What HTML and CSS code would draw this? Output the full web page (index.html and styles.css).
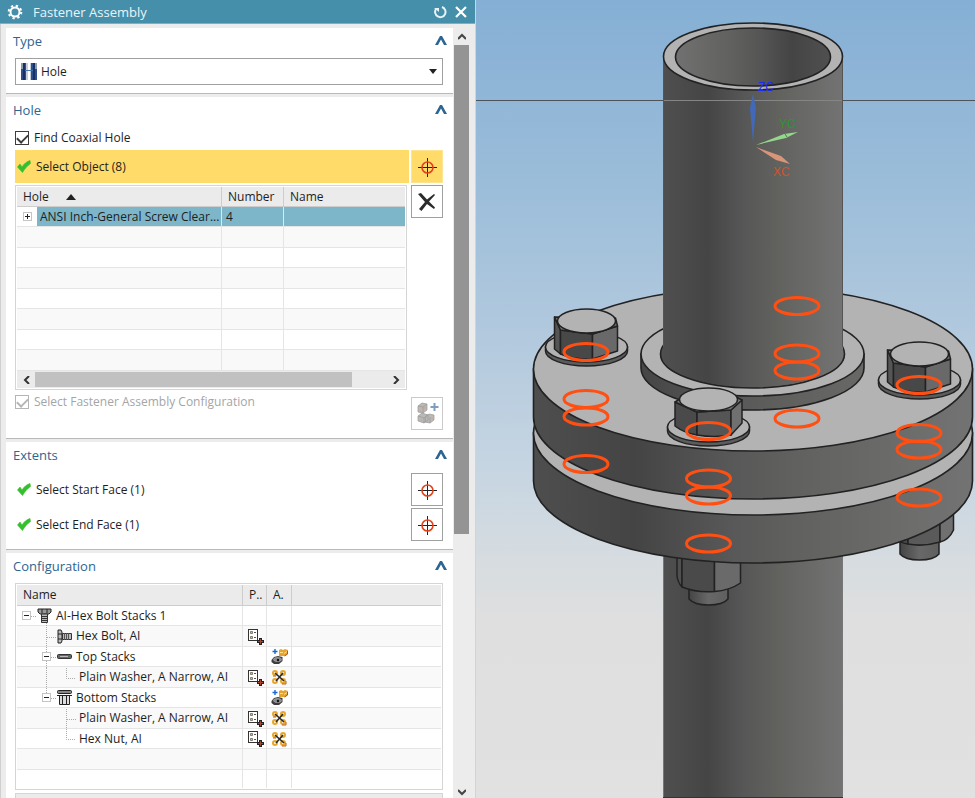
FILE: index.html
```html
<!DOCTYPE html>
<html lang="en">
<head>
    <meta charset="UTF-8">
    <meta name="viewport" content="width=device-width, initial-scale=1.0">
    <title>Fastener Assembly</title>
    <link rel="stylesheet" href="styles.css">
</head>
<body>
    <!-- Shared icons -->
    <svg class="defs" width="0" height="0" aria-hidden="true">
        <symbol id="i-chevron" viewBox="0 0 12 10"><path d="M0 9 5 0h2l5 9H9L6 3.5 3 9z" fill="#2c6592"/></symbol>
        <symbol id="i-check" viewBox="0 0 14 13"><path d="M.5 7 3 4l2 3C7 4 9.5 1.500 13 .5L13.500 3.500C10 6 8 8.500 5.500 12.500z" fill="#35bf2e" stroke="#35bf2e" stroke-width=".6"/></symbol>
        <symbol id="i-target" viewBox="0 0 20 20">
            <path d="M10.500 1v19M1 10.500h19" stroke="#222"/>
            <circle cx="10.500" cy="10.500" r="5.500" fill="none" stroke="#e0451d" stroke-width="1.600"/>
        </symbol>
        <symbol id="i-props" viewBox="0 0 17 17">
            <rect x="1.500" y="1.500" width="9" height="11" fill="#fff" stroke="#333"/>
            <path d="M3.500 3.500h2v2h-2zM3.500 8.500h2v2h-2z" fill="#e8c22b" stroke="#666" stroke-width=".8"/>
            <path d="M7 4.500h2M7 9.500h2" stroke="#555"/>
            <path d="M12 10h3v2h2v3h-2v2h-3v-2h-2v-3h2z" fill="#222"/>
            <path d="M13.500 11v5M11 13.500h5" stroke="#a8452c"/>
        </symbol>
        <symbol id="i-add" viewBox="0 0 17 17">
            <path d="M4 1v5M1.500 3.500h5" stroke="#1668d8" stroke-width="1.400"/>
            <path d="M8 2 10 1l2 1 2-1 3 1v4l-3 2H8z" fill="#e7a32f"/>
            <path d="M9 4.500h3M13 5.500l3-2" stroke="#ffe08a"/>
            <path d="M16.500 3v3l-3 2" fill="none" stroke="#b4501c"/>
            <path d="M.5 12 3 9l4-1 4.500 1v4L8 16H3L.5 14z" fill="#3d3d3d"/>
            <ellipse cx="6.500" cy="11.500" rx="4" ry="2" fill="#888" stroke="#bbb" stroke-width=".6"/>
            <circle cx="7" cy="12" r="1.200" fill="#111"/>
        </symbol>
        <symbol id="i-remove" viewBox="0 0 16 16">
            <g fill="none" stroke="#e9a626" stroke-width="2">
                <circle cx="4" cy="4" r="2"/><circle cx="12" cy="4" r="2"/>
                <circle cx="4" cy="12" r="2"/><circle cx="12" cy="12" r="2"/>
            </g>
            <path d="M2 7h3M15 12v3h-4" fill="none" stroke="#c45a18"/>
            <path d="m4 4 9 8M12 4l-7 8" stroke="#2b2b2b" stroke-width="1.600"/>
        </symbol>
    </svg>

    <main class="workspace">
        <section class="dialog" aria-label="Fastener Assembly">
            <header class="titlebar">
                <button class="title-btn" aria-label="Dialog options">
                    <svg width="16" height="16" viewBox="0 0 16 16">
                        <circle cx="8" cy="8" r="4.500" fill="none" stroke="#fff" stroke-width="2"/>
                        <circle cx="8" cy="8" r="6.300" fill="none" stroke="#fff" stroke-width="2" stroke-dasharray="2.300 2.650"/>
                    </svg>
                </button>
                <h1>Fastener Assembly</h1>
                <button class="title-btn" aria-label="Reset">
                    <svg width="14" height="14" viewBox="0 0 14 14"><path d="M3 4a5.200 5.200 0 1 0 6-2" fill="none" stroke="#e8f3f7" stroke-width="2"/><path d="M1 3h5v4z" fill="#e8f3f7"/></svg>
                </button>
                <button class="title-btn" aria-label="Close">
                    <svg width="12" height="12" viewBox="0 0 12 12"><path d="m1 1 10 10M11 1 1 11" stroke="#fff" stroke-width="2.200"/></svg>
                </button>
            </header>

            <div class="dialog-body">
                <div class="groups">
                    <section class="group">
                        <div class="group-head">
                            <h2>Type</h2>
                            <button class="collapse" aria-label="Collapse Type"><svg width="12" height="10"><use href="#i-chevron"/></svg></button>
                        </div>
                        <div class="type-box">
                            <svg width="16" height="17" viewBox="0 0 16 17" aria-hidden="true">
                                <path d="M0 0h5v17H0zM10 0h6v17h-6z" fill="#2d4f8c"/>
                                <path d="M0 0h2v6H0zM14 0h2v6h-2z" fill="#8b9aa8"/>
                                <path d="M3 0v17M13 0v17" stroke="#1a2f66" stroke-width="2"/>
                                <path d="M5 0h2v17H5zM9 0h1v17H9z" fill="#c3cedb"/>
                                <path d="M4 7.500h8" stroke="#4a72ad"/>
                            </svg>
                            <select aria-label="Type"><option>Hole</option></select>
                            <svg width="8" height="5" viewBox="0 0 8 5" aria-hidden="true"><path d="M0 0h8L4 5z" fill="#222"/></svg>
                        </div>
                    </section>

                    <section class="group group-hole">
                        <div class="group-head">
                            <h2>Hole</h2>
                            <button class="collapse" aria-label="Collapse Hole"><svg width="12" height="10"><use href="#i-chevron"/></svg></button>
                        </div>
                        <label class="check-row"><input type="checkbox" checked> Find Coaxial Hole</label>
                        <div class="pick-row active">
                            <div class="pick-label"><svg width="14" height="13"><use href="#i-check"/></svg>Select Object (8)</div>
                            <button class="tool" aria-label="Select Object"><svg width="20" height="20"><use href="#i-target"/></svg></button>
                        </div>
                        <div class="list-row">
                            <div class="list">
                                <table class="grid hole-grid">
                                    <colgroup><col class="c-hole"><col class="c-number"><col></colgroup>
                                    <thead>
                                        <tr>
                                            <th>Hole <svg class="sort" width="10" height="6" viewBox="0 0 10 6"><path d="M5 0 10 6H0z" fill="#222"/></svg></th>
                                            <th>Number</th>
                                            <th>Name</th>
                                        </tr>
                                    </thead>
                                    <tbody>
                                        <tr class="selected">
                                            <td><div class="hole-cell"><button class="expander plus" aria-label="Expand"></button><span>ANSI Inch-General Screw Clear...</span></div></td>
                                            <td>4</td>
                                            <td></td>
                                        </tr>
                                        <tr><td></td><td></td><td></td></tr>
                                        <tr><td></td><td></td><td></td></tr>
                                        <tr><td></td><td></td><td></td></tr>
                                        <tr><td></td><td></td><td></td></tr>
                                        <tr><td></td><td></td><td></td></tr>
                                        <tr><td></td><td></td><td></td></tr>
                                        <tr><td></td><td></td><td></td></tr>
                                    </tbody>
                                </table>
                                <div class="hscroll">
                                    <button aria-label="Scroll left"><svg width="7" height="8" viewBox="0 0 7 8"><path d="M6 0 2 4l4 4" fill="none" stroke="#333" stroke-width="2"/></svg></button>
                                    <div class="htrack"><div class="hthumb"></div></div>
                                    <button aria-label="Scroll right"><svg width="7" height="8" viewBox="0 0 7 8"><path d="m1 0 4 4-4 4" fill="none" stroke="#333" stroke-width="2"/></svg></button>
                                </div>
                            </div>
                            <button class="tool" aria-label="Remove">
                                <svg width="18" height="18" viewBox="0 0 18 18"><path d="M0 1 3 0l6 6.500L16 1l1 1-6 6.500 6 6-1 1.500-7-5L3.500 18 1 16l6-7z" fill="#2b2b2b"/></svg>
                            </button>
                        </div>
                        <div class="config-row">
                            <label class="check-row disabled"><input type="checkbox" checked disabled> Select Fastener Assembly Configuration</label>
                            <button class="tool" aria-label="Select Fastener Assembly Configuration" disabled>
                                <svg width="23" height="23" viewBox="0 0 23 23">
                                    <g fill="#bcb8b5" stroke="#999" stroke-width=".7">
                                        <path d="m2 4 4-3 5 1v6l-4 3-5-1zM2 14l4-3 6 2v5l-4 3-6-2zM10 14l3-2 5 1v5l-4 3-5-1z"/>
                                        <path d="m2 4 5 1 4-3M7 5v6M2 14l6 2 4-3M8 16v5M14 15v6" fill="none"/>
                                    </g>
                                    <path d="M4 9h1M9 5v2M5 18h1M16 16v1M11 19h1" stroke="#d99a7c"/>
                                    <path d="M18.500 1v8M14.500 5h8" stroke="#7f9dbd" stroke-width="2"/>
                                </svg>
                            </button>
                        </div>
                    </section>

                    <section class="group">
                        <div class="group-head">
                            <h2>Extents</h2>
                            <button class="collapse" aria-label="Collapse Extents"><svg width="12" height="10"><use href="#i-chevron"/></svg></button>
                        </div>
                        <div class="pick-list">
                            <div class="pick-row">
                                <div class="pick-label"><svg width="14" height="13"><use href="#i-check"/></svg>Select Start Face (1)</div>
                                <button class="tool" aria-label="Select Start Face"><svg width="20" height="20"><use href="#i-target"/></svg></button>
                            </div>
                            <div class="pick-row">
                                <div class="pick-label"><svg width="14" height="13"><use href="#i-check"/></svg>Select End Face (1)</div>
                                <button class="tool" aria-label="Select End Face"><svg width="20" height="20"><use href="#i-target"/></svg></button>
                            </div>
                        </div>
                    </section>

                    <section class="group group-config">
                        <div class="group-head">
                            <h2>Configuration</h2>
                            <button class="collapse" aria-label="Collapse Configuration"><svg width="12" height="10"><use href="#i-chevron"/></svg></button>
                        </div>
                        <div class="list">
                            <table class="grid config-grid">
                                <colgroup><col class="c-name"><col class="c-prop"><col class="c-act"><col></colgroup>
                                <thead>
                                    <tr><th>Name</th><th>P..</th><th>A.</th><th></th></tr>
                                </thead>
                                <tbody>
                                    <tr>
                                        <td><div class="node level-1">
                                            <svg class="lines" width="62" height="21"><path d="M14 10.500h6M29.500 17v4"/></svg>
                                            <button class="expander" aria-label="Collapse"></button>
                                            <svg width="15" height="15" viewBox="0 0 15 15"><path d="M1 1h13v3L12 6H3L1 4z" fill="#999" stroke="#222"/><path d="M5 1v4M10 1v4" stroke="#222"/><path d="M4.500 6h6v8.500h-6z" fill="#bbb" stroke="#333"/><path d="M4 8.500h7M4 10.500h7M4 12.500h7" stroke="#333"/></svg>
                                            AI-Hex Bolt Stacks 1
                                        </div></td>
                                        <td></td><td></td><td></td>
                                    </tr>
                                    <tr>
                                        <td><div class="node level-2 leaf">
                                            <svg class="lines" width="62" height="21"><path d="M29.500 0v21M30 10.500h9"/></svg>
                                            <svg width="15" height="15" viewBox="0 0 15 15"><path d="M1 1h3l1 2v9l-1 2H1z" fill="#bbb" stroke="#222"/><path d="M1 5h4M1 10h4" stroke="#222"/><path d="M5.500 4.500h9v6h-9z" fill="#bbb" stroke="#333"/><path d="M7.500 4v7M9.500 4v7M11.500 4v7" stroke="#555"/></svg>
                                            Hex Bolt, AI
                                        </div></td>
                                        <td><svg width="17" height="17"><use href="#i-props"/></svg></td><td></td><td></td>
                                    </tr>
                                    <tr>
                                        <td><div class="node level-2">
                                            <svg class="lines" width="62" height="21"><path d="M29.500 0v21M34 10.500h6"/></svg>
                                            <button class="expander" aria-label="Collapse"></button>
                                            <svg width="15" height="15" viewBox="0 0 15 15"><rect x=".5" y="5.500" width="14" height="4" rx="1" fill="#666" stroke="#333"/><path d="M3 7.500h8" stroke="#bbb"/></svg>
                                            Top Stacks
                                        </div></td>
                                        <td></td><td><svg width="17" height="17"><use href="#i-add"/></svg></td><td></td>
                                    </tr>
                                    <tr>
                                        <td><div class="node level-3">
                                            <svg class="lines" width="62" height="21"><path d="M29.500 0v21M49.500 0v10.500h9"/></svg>
                                            Plain Washer, A Narrow, AI
                                        </div></td>
                                        <td><svg width="17" height="17"><use href="#i-props"/></svg></td>
                                        <td><svg width="16" height="16"><use href="#i-remove"/></svg></td><td></td>
                                    </tr>
                                    <tr>
                                        <td><div class="node level-2">
                                            <svg class="lines" width="62" height="21"><path d="M29.500 0v10M34 10.500h6"/></svg>
                                            <button class="expander" aria-label="Collapse"></button>
                                            <svg width="15" height="15" viewBox="0 0 15 15"><rect x=".5" y=".5" width="14" height="3" rx="1" fill="#888" stroke="#222"/><path d="M2.500 5.500h10v9h-10z" fill="#ddd" stroke="#222"/><path d="M0 5.500h15M5.500 6v8M9.500 6v8" stroke="#222"/></svg>
                                            Bottom Stacks
                                        </div></td>
                                        <td></td><td><svg width="17" height="17"><use href="#i-add"/></svg></td><td></td>
                                    </tr>
                                    <tr>
                                        <td><div class="node level-3">
                                            <svg class="lines" width="62" height="21"><path d="M49.500 0v21M50 10.500h9"/></svg>
                                            Plain Washer, A Narrow, AI
                                        </div></td>
                                        <td><svg width="17" height="17"><use href="#i-props"/></svg></td>
                                        <td><svg width="16" height="16"><use href="#i-remove"/></svg></td><td></td>
                                    </tr>
                                    <tr>
                                        <td><div class="node level-3">
                                            <svg class="lines" width="62" height="21"><path d="M49.500 0v10.500h9"/></svg>
                                            Hex Nut, AI
                                        </div></td>
                                        <td><svg width="17" height="17"><use href="#i-props"/></svg></td>
                                        <td><svg width="16" height="16"><use href="#i-remove"/></svg></td><td></td>
                                    </tr>
                                    <tr><td></td><td></td><td></td><td></td></tr>
                                    <tr class="last"><td></td><td></td><td></td><td></td></tr>
                                </tbody>
                            </table>
                        </div>
                        <div class="next-list"></div>
                    </section>
                </div>

                <div class="vscroll">
                    <button aria-label="Scroll up"><svg width="8" height="7" viewBox="0 0 8 7"><path d="m0 6 4-4 4 4" fill="none" stroke="#444" stroke-width="2"/></svg></button>
                    <div class="vtrack"><div class="vthumb"></div></div>
                    <button class="down" aria-label="Scroll down"><svg width="8" height="7" viewBox="0 0 8 7"><path d="m0 1 4 4 4-4" fill="none" stroke="#444" stroke-width="2"/></svg></button>
                </div>
            </div>
        </section>

        <section class="viewport" aria-label="Graphics window">
            <svg class="model" viewBox="476 0 499 798" preserveAspectRatio="xMidYMid slice">
                <defs>
                    <linearGradient id="pipe" gradientUnits="userSpaceOnUse" x1="663" y1="0" x2="843" y2="0">
                        <stop offset="0" stop-color="#4f4f4f"/><stop offset=".25" stop-color="#454545"/>
                        <stop offset=".45" stop-color="#575757"/><stop offset=".65" stop-color="#62625f"/>
                        <stop offset="1" stop-color="#737373"/>
                    </linearGradient>
                    <linearGradient id="bore">
                        <stop offset="0" stop-color="#717171"/><stop offset=".35" stop-color="#61615f"/>
                        <stop offset=".55" stop-color="#555"/><stop offset=".75" stop-color="#444"/>
                        <stop offset="1" stop-color="#505050"/>
                    </linearGradient>
                    <linearGradient id="rim" gradientUnits="userSpaceOnUse" x1="533" y1="0" x2="973" y2="0">
                        <stop offset="0" stop-color="#4e4e4e"/><stop offset=".23" stop-color="#444"/>
                        <stop offset=".45" stop-color="#585858"/><stop offset=".6" stop-color="#61615f"/>
                        <stop offset="1" stop-color="#737373"/>
                    </linearGradient>
                    <linearGradient id="tip">
                        <stop offset="0" stop-color="#444"/><stop offset=".5" stop-color="#686868"/><stop offset="1" stop-color="#5f5f5f"/>
                    </linearGradient>
                    <g id="washer" stroke="#222" stroke-width="1.500">
                        <path d="M-41 26v4a41 15 0 0 0 82 0v-4z" fill="#5c5c5c"/>
                        <ellipse cy="26" rx="41" ry="15" fill="#b3b3b3"/>
                    </g>
                    <g id="bolt">
                        <use href="#washer"/>
                        <g stroke="#222" stroke-width="1.500" stroke-linejoin="round">
                            <path d="M-32-4-26 9v24l-6-5z" fill="#555"/>
                            <path d="m-26 9 32 4v25q-18 1-32-5z" fill="#484848"/>
                            <path d="M6 13 31 5v25L6 38z" fill="#696969"/>
                            <path d="m-32-4 6 13 32 4L31 5 29-3z" fill="#777"/>
                            <ellipse rx="29" ry="12" fill="#b3b3b3"/>
                        </g>
                    </g>
                </defs>

                <path d="M476 100.500h499" stroke="#4d5359"/>

                <!-- lower pipe and nuts -->
                <path d="M663 500h180v298H663z" fill="url(#pipe)"/>
                <path d="M663.500 500v298M842.500 500v298" stroke="#777"/>
                <path d="M663 797.500h180" stroke="#333"/>
                <g stroke="#222" stroke-width="1.500" stroke-linejoin="round">
                    <path d="M689 586v13q5 6 19.500 6t19.500-6v-13z" fill="url(#tip)"/>
                    <path d="M677 552v24q1 7 5 11V552z" fill="#505050"/>
                    <path d="M682 552v35q15 6 32.500 4.500V552z" fill="#4a4a4a"/>
                    <path d="M714.500 552v39.500q15-1 26-8.500V552z" fill="#6a6a6a"/>
                    <path d="M900 540v14q5 6 19.500 6t19.500-6v-14z" fill="url(#tip)"/>
                    <path d="M897 530v10q4 3 11 4v-14z" fill="#4a4a4a"/>
                    <path d="M908 520v24q15 3 32-2v-22z" fill="#5a5a5a"/>
                    <path d="M940 505v37q9-2 13.500-12v-25z" fill="#707070"/>
                </g>

                <!-- flanges -->
                <g stroke="#222" stroke-width="1.600">
                    <path d="M533.500 433v48a219.500 82 0 0 0 439 0v-48z" fill="url(#rim)"/>
                    <ellipse cx="753" cy="433" rx="219.500" ry="82" fill="#b3b3b3"/>
                    <path d="M533.500 369v48a219.500 82 0 0 0 439 0v-48z" fill="url(#rim)"/>
                    <ellipse cx="753" cy="369" rx="219.500" ry="82" fill="#b3b3b3"/>
                    <path d="M641 354v14a111.500 42 0 0 0 223 0v-14z" fill="url(#rim)"/>
                    <ellipse cx="752.500" cy="354" rx="111.500" ry="42" fill="#b3b3b3"/>
                    <ellipse cx="752.500" cy="354" rx="92" ry="34" fill="url(#pipe)"/>
                </g>

                <!-- upper pipe -->
                <path d="M663 57h180v297a90 33 0 0 1-180 0z" fill="url(#pipe)"/>
                <path d="M663.500 57v290M842.500 57v290" stroke="#555"/>
                <ellipse cx="753" cy="56.500" rx="89.500" ry="33.500" fill="#b3b3b3" stroke="#222" stroke-width="1.600"/>
                <ellipse cx="753" cy="57" rx="77.500" ry="29" fill="url(#bore)" stroke="#222" stroke-width="1.600"/>
                <path d="M664 100.500h178" stroke="#858585"/>

                <use href="#bolt" transform="translate(586.500 321)"/>
                <use href="#bolt" transform="translate(919.500 354)"/>
                <use href="#washer" transform="translate(708.500 401)"/>
                <g stroke="#222" stroke-width="1.500" stroke-linejoin="round">
                    <path d="m675 402 22 10v23q-13-2-22-9z" fill="#4a4a4a"/>
                    <path d="m697 412 34-2v25q-17 3-34 0z" fill="#555"/>
                    <path d="m731 410 11-10v23l-11 12z" fill="#707070"/>
                    <path d="m675 402 22 10 34-2 11-10-6-3-56 2z" fill="#777"/>
                    <ellipse cx="708.500" cy="399.500" rx="29" ry="11.500" fill="#b3b3b3"/>
                </g>

                <!-- selected hole edges -->
                <g fill="none" stroke="#ff4f12" stroke-width="3">
                    <ellipse cx="586" cy="352" rx="22" ry="8.500"/><ellipse cx="586" cy="399" rx="22" ry="8.500"/>
                    <ellipse cx="586" cy="416.500" rx="22" ry="8.500"/><ellipse cx="586" cy="464" rx="22" ry="8.500"/>
                    <ellipse cx="797" cy="306" rx="22" ry="8.500"/><ellipse cx="797" cy="353.500" rx="22" ry="8.500"/>
                    <ellipse cx="797" cy="370.500" rx="22" ry="8.500"/><ellipse cx="797" cy="418.500" rx="22" ry="8.500"/>
                    <ellipse cx="708.500" cy="431" rx="22" ry="8.500"/><ellipse cx="708.500" cy="478.500" rx="22" ry="8.500"/>
                    <ellipse cx="708.500" cy="495.500" rx="22" ry="8.500"/><ellipse cx="708.500" cy="543.500" rx="22" ry="8.500"/>
                    <ellipse cx="919" cy="385" rx="22" ry="8.500"/><ellipse cx="919" cy="433" rx="22" ry="8.500"/>
                    <ellipse cx="919" cy="449.500" rx="22" ry="8.500"/><ellipse cx="919" cy="497.500" rx="22" ry="8.500"/>
                </g>

                <!-- work coordinate system -->
                <path d="m753 142-3-34 3-14 3 14z" fill="#4169b8"/>
                <path d="m756 145 28-11 14-2-12 6z" fill="#94d78d"/>
                <path d="m785 134 2 3" stroke="#4c7a48"/>
                <path d="m756 147 25 9 9 8-14-4z" fill="#d8957a"/>
                <g class="axis">
                    <text x="758" y="91" fill="#1a2cf0">ZC</text>
                    <text x="779" y="128" fill="#259a2c">YC</text>
                    <text x="773" y="176" fill="#d0542e">XC</text>
                </g>
            </svg>
        </section>
    </main>
</body>
</html>
```

FILE: styles.css
```css
:root {
    --title: #458fab;
    --frame: #ececec;
    --heading: #2c6592;
    --highlight: #ffdb69;
    --selected: #7db5c9;
    --line: #e4e6e6;
}

* {
    margin: 0;
    padding: 0;
    box-sizing: border-box;
}

body {
    font-family: 'Open Sans', 'Noto Sans', sans-serif;
    font-size: 12px;
    line-height: 16px;
    color: #1e1e1e;
}

button {
    font: inherit;
    border: none;
    background: none;
    display: flex;
    align-items: center;
    justify-content: center;
    cursor: pointer;
}

svg {
    display: block;
    flex: none;
}

.defs {
    position: absolute;
}

.workspace {
    display: grid;
    grid-template-columns: clamp(380px, 49vw, 476px) 1fr;
    height: 100vh;
    overflow: hidden;
}

/* Dialog */
.dialog {
    display: flex;
    flex-direction: column;
    min-height: 0;
    background: var(--frame);
    border-right: 1px solid #d0d4d6;
}

.titlebar {
    display: flex;
    align-items: center;
    gap: 8px;
    height: 24px;
    padding: 0 8px 0 7px;
    background: var(--title);
    border-bottom: 1px solid #7fb0c2;
    color: #eaf4f8;
}

.titlebar h1 {
    flex: 1;
    margin-left: 2px;
    font-size: 13px;
    font-weight: 400;
}

.dialog-body {
    display: flex;
    flex: 1;
    min-height: 0;
    padding: 4px 6px 0 5px;
    border-left: 1px solid #cfcfcf;
}

.groups {
    flex: 1;
    min-width: 0;
    overflow: hidden;
}

.group {
    margin-bottom: 3px;
    padding: 0 10px 8px 9px;
    background: #fff;
    border-bottom: 1px solid #b9b9b9;
}

.group-head {
    display: flex;
    align-items: center;
    justify-content: space-between;
    height: 30px;
    margin: 0 -7px 0 -2px;
    padding-bottom: 5px;
}

.group-head h2 {
    font-size: 13px;
    font-weight: 400;
    color: var(--heading);
}

.collapse {
    width: 18px;
    height: 18px;
}

/* Type drop-down */
.type-box {
    display: flex;
    align-items: center;
    gap: 4px;
    height: 27px;
    padding: 0 5px;
    border: 1px solid #a0a0a0;
}

.type-box select {
    flex: 1;
    appearance: none;
    border: none;
    background: none;
    font: inherit;
    color: inherit;
}

/* Check boxes */
.check-row {
    display: flex;
    align-items: center;
    gap: 5px;
    height: 23px;
    padding-bottom: 1px;
}

.check-row input {
    appearance: none;
    display: flex;
    justify-content: center;
    width: 14px;
    height: 14px;
    border: 1px solid #3c3c3c;
    background: #fff;
}

.check-row input:checked::before {
    content: '';
    width: 9px;
    height: 5px;
    margin-top: 2px;
    border: solid #3c3c3c;
    border-width: 0 0 2px 2px;
    transform: rotate(-45deg);
}

.check-row.disabled {
    padding-bottom: 0;
    color: #a3a6a6;
}

.check-row.disabled input,
.check-row.disabled input::before {
    border-color: #b5b5b5;
}

/* Selection steps */
.pick-list {
    display: grid;
    gap: 2px;
    padding-top: 1px;
}

.pick-row {
    display: flex;
    gap: 2px;
}

.pick-label {
    display: flex;
    align-items: center;
    flex: 1;
    gap: 5px;
    padding-left: 2px;
}

.tool {
    flex: none;
    width: 32px;
    height: 33px;
    border: 1px solid #a0a0a0;
    background: #fff;
}

.tool:disabled {
    border-color: #cacaca;
}

.pick-row.active .pick-label,
.pick-row.active .tool {
    background: var(--highlight);
    border-color: #ffe48f;
}

/* Tables */
.list-row {
    display: flex;
    align-items: flex-start;
    gap: 4px;
    margin-top: 2px;
}

.list {
    flex: 1;
    min-width: 0;
    padding: 1px;
    border: 1px solid #d4d6d6;
}

.grid {
    width: 100%;
    table-layout: fixed;
    border-collapse: separate;
    border-spacing: 0;
}

.grid th {
    height: 20px;
    padding-left: 6px;
    background: #ebebeb;
    border-right: 1px solid #cdcdcd;
    border-bottom: 1px solid #cdcdcd;
    font-weight: 400;
    text-align: left;
    white-space: nowrap;
}

.grid th:last-child,
.grid td:last-child {
    border-right: none;
}

.grid td {
    height: 20px;
    padding-left: 4px;
    border-right: 1px solid var(--line);
    border-bottom: 1px solid var(--line);
    white-space: nowrap;
}

.grid tr:nth-child(even) td {
    height: 21px;
    background: #f9f9f9;
}

.grid .selected td {
    background: var(--selected);
}

.grid .selected td:first-child {
    padding: 0;
}

.sort {
    display: inline;
    margin-left: 14px;
    vertical-align: 1px;
}

.c-hole {
    width: 205px;
}

.c-number {
    width: 62px;
}

.hole-cell {
    display: flex;
    align-items: center;
    height: 19px;
    background: #fff;
}

.hole-cell .expander {
    margin: 0 5px 0 6px;
}

.hole-cell span {
    flex: 1;
    padding-left: 3px;
    line-height: 19px;
    background: var(--selected);
}

.expander {
    position: relative;
    width: 9px;
    height: 9px;
    flex: none;
    border: 1px solid #c4c4c4;
    background: #fff;
}

.expander::before,
.expander.plus::after {
    content: '';
    position: absolute;
    width: 5px;
    height: 1px;
    background: #222;
}

.expander.plus::after {
    transform: rotate(90deg);
}

.hscroll {
    display: flex;
    height: 17px;
    padding: 1px 0;
    background: #ebebeb;
}

.hscroll button {
    width: 18px;
}

.htrack {
    flex: 1;
}

.hthumb {
    width: 90%;
    height: 100%;
    background: #c1c1c1;
}

.config-row {
    display: flex;
    align-items: flex-start;
    justify-content: space-between;
}

.config-row .tool {
    margin-top: 7px;
}

/* Configuration tree */
.group-config {
    padding-bottom: 0;
}

.config-grid th {
    height: 21px;
}

.c-name {
    width: 226px;
}

.c-prop {
    width: 24px;
}

.c-act {
    width: 25px;
}

.config-grid td:first-child {
    padding: 0;
}

.config-grid .last td {
    height: 18px;
    border-bottom: none;
}

.node {
    position: relative;
    display: flex;
    align-items: center;
    gap: 4px;
    height: 19px;
}

.node .expander {
    margin-right: 2px;
}

.lines {
    position: absolute;
    left: 0;
    top: 0;
    fill: none;
    stroke: #aaa;
    stroke-dasharray: 1 1;
}

.level-1 {
    padding-left: 5px;
}

.level-2 {
    padding-left: 25px;
}

.level-2.leaf {
    padding-left: 40px;
}

.level-3 {
    padding-left: 62px;
}

.next-list {
    height: 20px;
    margin-top: 3px;
    background: #ebebeb;
    border: 1px solid #d4d6d6;
}

/* Vertical scroll bar */
.vscroll {
    display: flex;
    flex-direction: column;
    width: 16px;
    padding-left: 1px;
}

.vscroll button {
    height: 17px;
}

.vscroll .down {
    height: 12px;
}

.vtrack {
    flex: 1;
}

.vthumb {
    height: 66%;
    background: #949494;
}

/* Graphics window */
.viewport {
    min-width: 0;
    background: linear-gradient(#85afd5 0%, #9bbdd9 23%, #b2c9de 42%, #c8d6e2 60%, #d6dce0 70%, #dfdfdf 78%, #e1e1e1 100%);
}

.model {
    width: 100%;
    height: 100%;
}

.axis {
    font-family: 'Liberation Sans', Arial, sans-serif;
    font-size: 12px;
}
```
